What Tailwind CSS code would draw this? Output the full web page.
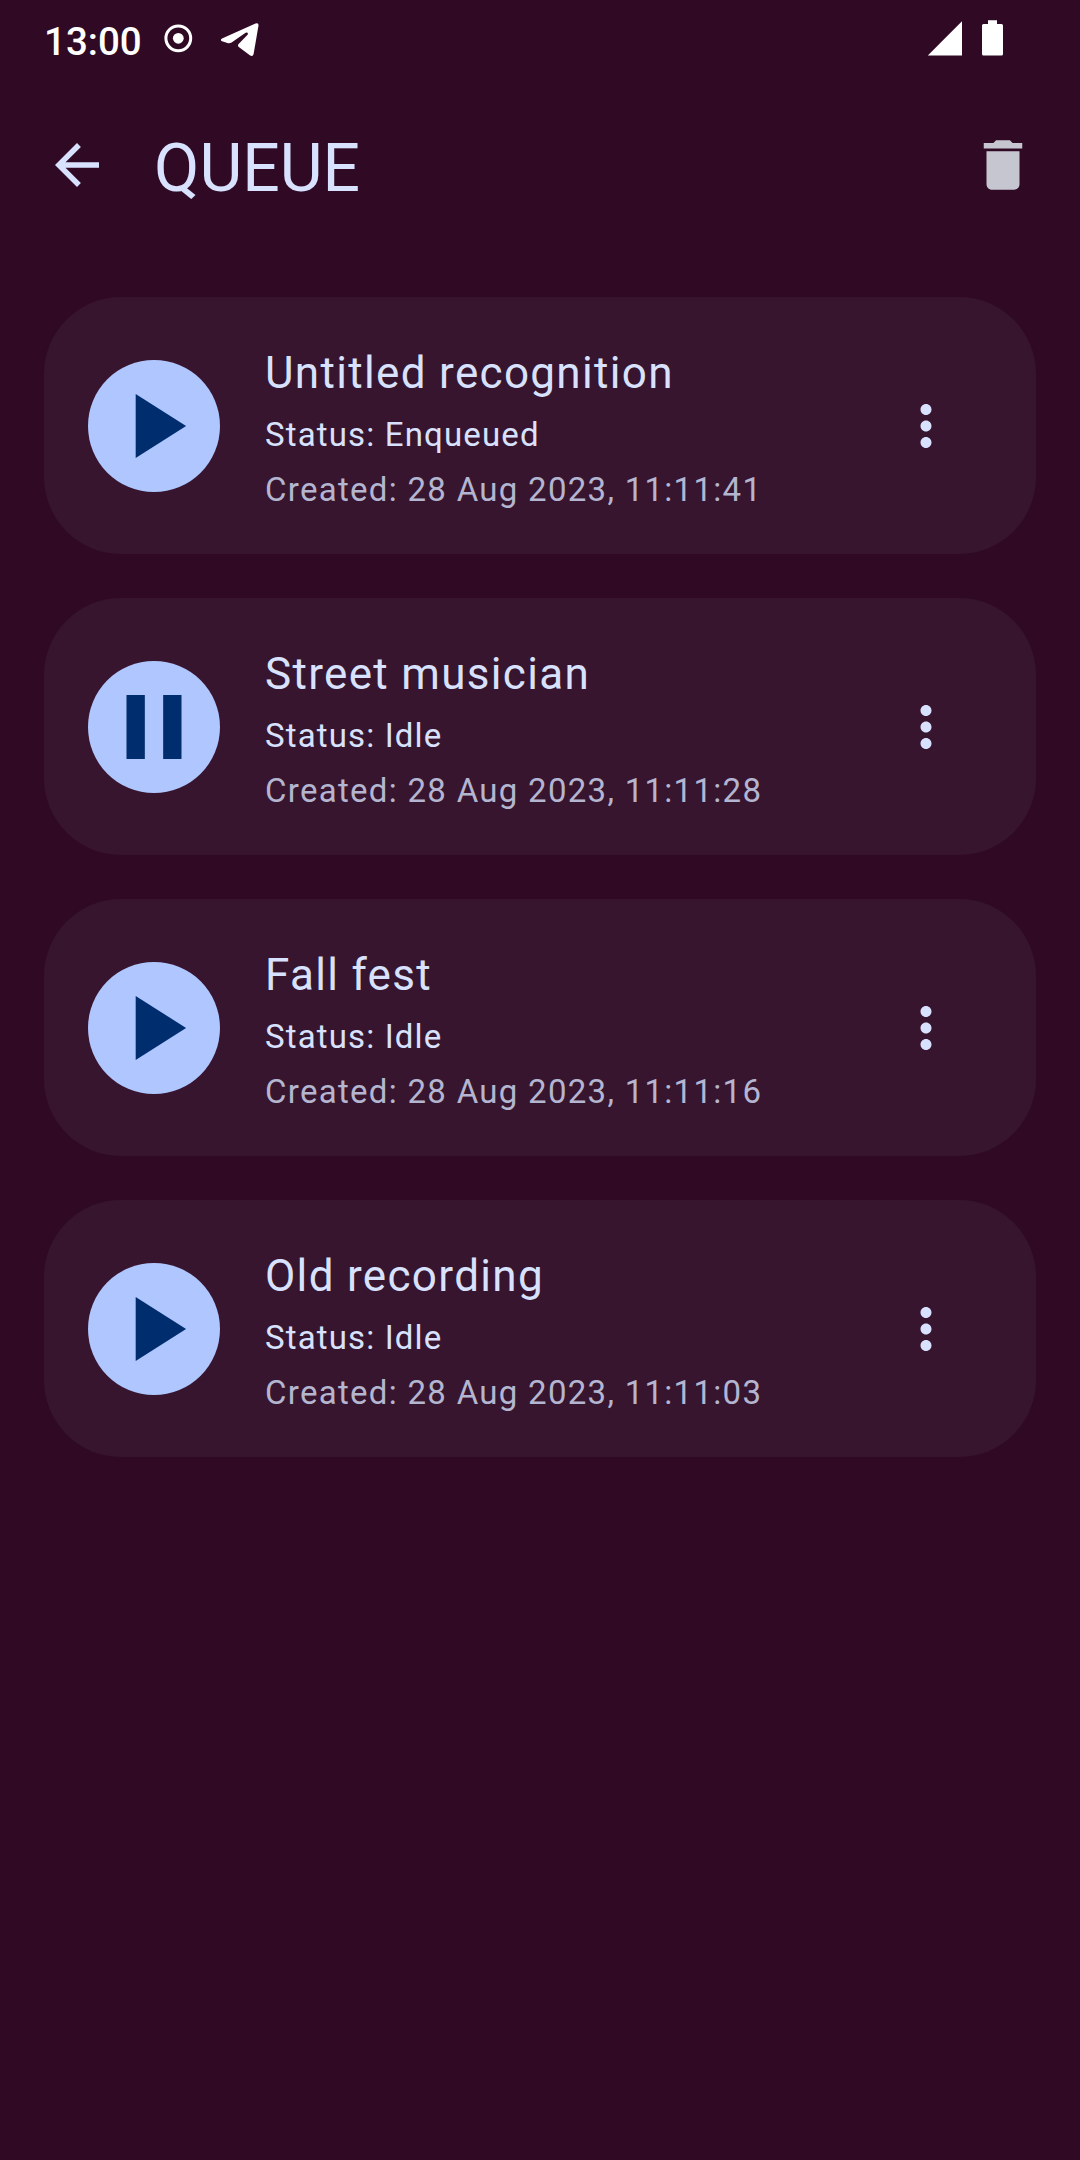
<!DOCTYPE html>
<html lang="en">
<head>
<meta charset="utf-8">
<title>Queue</title>
<script src="https://cdn.jsdelivr.net/npm/@tailwindcss/browser@4"></script>
</head>
<body class="bg-[#300a24] font-['Roboto',sans-serif] text-[#d8e2ff]">
<svg class="hidden">
  <symbol id="play" viewBox="0 0 24 24"><path d="M8 5v14l11-7z"/></symbol>
  <symbol id="pause" viewBox="0 0 24 24"><path d="M6 19h4V5H6v14zm8-14v14h4V5h-4z"/></symbol>
  <symbol id="more" viewBox="0 0 24 24"><path d="M12 8c1.1 0 2-.9 2-2s-.9-2-2-2-2 .9-2 2 .9 2 2 2zm0 2c-1.1 0-2 .9-2 2s.9 2 2 2 2-.9 2-2-.9-2-2-2zm0 6c-1.1 0-2 .9-2 2s.9 2 2 2 2-.9 2-2-.9-2-2-2z"/></symbol>
</svg>
<div class="flex h-[2160px] w-[1080px] flex-col overflow-hidden">
  <div class="flex h-[77px] items-start justify-between pl-[44px] pr-[76px] text-white">
    <div class="flex items-start">
      <span class="mt-[19px] w-[100px] text-[38.5px] leading-[45px] font-medium">13:00</span>
      <svg class="ml-[20px] mt-[24px] size-[29px]" viewBox="0 0 29 29"><circle cx="14.3" cy="14.3" r="12.4" fill="none" stroke="currentColor" stroke-width="3"/><circle cx="14.3" cy="14.3" r="5.4" fill="currentColor"/></svg>
      <svg class="ml-[27px] mt-[22px] h-[36px] w-[40px]" viewBox="0 0 40 36" fill="currentColor"><path d="M2 16.6L35.500 1.500Q38.800 .4 38.500 3.600L33.600 32Q32.800 35.200 29.800 33.200L18.800 25Q17.200 23.600 18.600 22L27.800 12.400Q28.400 10 25.600 10.800L11.600 20.400Q9.600 21.600 7.500 21L2 19.200Q-.2 18 2 16.600Z"/></svg>
    </div>
    <div class="flex items-start">
      <svg class="mt-[21px] h-[35px] w-[36px]" viewBox="0 0 36 35" fill="currentColor"><path d="M.8 34.500L35 .3V34.500z"/></svg>
      <svg class="ml-[19px] mt-[20px] h-[36px] w-[22px]" viewBox="0 0 22 36" fill="currentColor"><path d="M6 .3h9V4h4.500Q21 4 21 5.500V34Q21 35.500 19.500 35.500H1.500Q0 35.500 0 34V5.500Q0 4 1.500 4H6z"/></svg>
    </div>
  </div>
  <header class="flex h-[176px] items-center pl-[44px] pr-[44px]">
    <svg class="size-[66px]" viewBox="0 0 24 24" fill="currentColor"><path d="M20 11H7.830l5.590-5.590L12 4l-8 8 8 8 1.410-1.410L7.830 13H20v-2z"/></svg>
    <h1 class="ml-[44px] flex-1 pt-[8px] text-[66px] leading-[88px]">QUEUE</h1>
    <svg class="size-[66px] text-[#c6c6d0]" viewBox="0 0 24 24" fill="currentColor"><path d="M6 19c0 1.100.9 2 2 2h8c1.100 0 2-.9 2-2V7H6v12zM19 4h-3.500l-1-1h-5l-1 1H5v2h14V4z"/></svg>
  </header>
  <main class="flex flex-col gap-[44px] px-[44px] pt-[44px]">
    <article class="flex h-[257px] items-center rounded-[77px] bg-[#37152e] pl-[44px] pr-[77px]">
      <div class="mt-px flex size-[132px] items-center justify-center rounded-full bg-[#afc6ff]"><svg class="size-[110px] fill-[#002d6d]"><use href="#play"/></svg></div>
      <div class="ml-[45px] flex-1">
        <h2 class="text-[44px] leading-[66px] tracking-[1.330px]">Untitled recognition</h2>
        <p class="mt-[7px] text-[33px] leading-[44px] tracking-[1.150px]">Status: Enqueued</p>
        <p class="mt-[11px] text-[33px] leading-[44px] tracking-[1.290px] text-[#b4b5d0]">Created: 28 Aug 2023, 11:11:41</p>
      </div>
      <svg class="mt-px size-[66px] fill-current"><use href="#more"/></svg>
    </article>
    <article class="flex h-[257px] items-center rounded-[77px] bg-[#37152e] pl-[44px] pr-[77px]">
      <div class="mt-px flex size-[132px] items-center justify-center rounded-full bg-[#afc6ff]"><svg class="size-[110px] fill-[#002d6d]"><use href="#pause"/></svg></div>
      <div class="ml-[45px] flex-1">
        <h2 class="text-[44px] leading-[66px] tracking-[1.330px]">Street musician</h2>
        <p class="mt-[7px] text-[33px] leading-[44px] tracking-[1.150px]">Status: Idle</p>
        <p class="mt-[11px] text-[33px] leading-[44px] tracking-[1.290px] text-[#b4b5d0]">Created: 28 Aug 2023, 11:11:28</p>
      </div>
      <svg class="mt-px size-[66px] fill-current"><use href="#more"/></svg>
    </article>
    <article class="flex h-[257px] items-center rounded-[77px] bg-[#37152e] pl-[44px] pr-[77px]">
      <div class="mt-px flex size-[132px] items-center justify-center rounded-full bg-[#afc6ff]"><svg class="size-[110px] fill-[#002d6d]"><use href="#play"/></svg></div>
      <div class="ml-[45px] flex-1">
        <h2 class="text-[44px] leading-[66px] tracking-[1.330px]">Fall fest</h2>
        <p class="mt-[7px] text-[33px] leading-[44px] tracking-[1.150px]">Status: Idle</p>
        <p class="mt-[11px] text-[33px] leading-[44px] tracking-[1.290px] text-[#b4b5d0]">Created: 28 Aug 2023, 11:11:16</p>
      </div>
      <svg class="mt-px size-[66px] fill-current"><use href="#more"/></svg>
    </article>
    <article class="flex h-[257px] items-center rounded-[77px] bg-[#37152e] pl-[44px] pr-[77px]">
      <div class="mt-px flex size-[132px] items-center justify-center rounded-full bg-[#afc6ff]"><svg class="size-[110px] fill-[#002d6d]"><use href="#play"/></svg></div>
      <div class="ml-[45px] flex-1">
        <h2 class="text-[44px] leading-[66px] tracking-[1.330px]">Old recording</h2>
        <p class="mt-[7px] text-[33px] leading-[44px] tracking-[1.150px]">Status: Idle</p>
        <p class="mt-[11px] text-[33px] leading-[44px] tracking-[1.290px] text-[#b4b5d0]">Created: 28 Aug 2023, 11:11:03</p>
      </div>
      <svg class="mt-px size-[66px] fill-current"><use href="#more"/></svg>
    </article>
  </main>
</div>
</body>
</html>
